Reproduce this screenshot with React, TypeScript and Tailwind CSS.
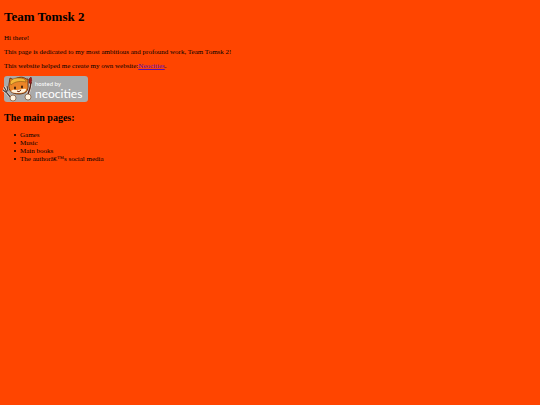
const pages = ['Games', 'Music', 'Main books', 'The authorâ€™s social media'];

function CatLogo() {
  return (
    <svg viewBox="0 0 36 28" className="absolute -top-px -left-1 h-7 w-9" aria-hidden="true">
      {/* fork and brush */}
      <path d="M4 12l3 5M7 11l1 5M3 15l4 3 4 5" fill="none" stroke="#f4e6d8" strokeWidth="2.6" />
      <path d="M4 12l3 5M7 11l1 5M3 15l4 3 4 5" fill="none" stroke="#4a4446" strokeWidth="1.3" />
      <path d="M31 4l-1 8-2 7" fill="none" stroke="#f4e6d8" strokeWidth="3" />
      <path d="M31 7l-1 6-2 6" fill="none" stroke="#5a2418" strokeWidth="1.5" />
      <path d="M31 2l1 3-1 4-2-1 0-4z" fill="#a01818" stroke="#54120c" strokeWidth="0.5" />
      {/* head */}
      <path d="M9 9l1-6 4 2c3-3 9-4 12-1l2 0 0 6c1 6-3 9-9 9-7 0-11-3-10-10z" fill="#ec8527" stroke="#5e2c10" strokeWidth="0.9" />
      <path d="M10 8c1-4 4-5 9-5 4 0 7 1 7 4-5-1-11-1-15 3z" fill="#f5b638" stroke="#8a5213" strokeWidth="0.6" />
      <path d="M11 16c2-2 4-1 6-1 3 0 6-2 9-1 0 3-3 4-7 4-4 0-7 0-8-2z" fill="#fff0d8" />
      <ellipse cx="15" cy="13" rx="1" ry="1.400" fill="#3d1d0e" />
      <ellipse cx="22" cy="12" rx="1" ry="1.400" fill="#3d1d0e" />
      <path d="M17 16q2 2 4-1" fill="none" stroke="#6d2414" strokeWidth="1" />
      {/* paws */}
      <circle cx="13" cy="23" r="3" fill="#fff3df" stroke="#7a4a2a" strokeWidth="0.7" />
      <circle cx="28" cy="22" r="3" fill="#fff3df" stroke="#7a4a2a" strokeWidth="0.7" />
    </svg>
  );
}

function HostedBadge() {
  return (
    <a href="https://neocities.org" className="relative flex h-[26px] w-[84px] flex-col rounded-[3px] bg-[#aaa] pt-1 pl-[31px] font-[Lato,sans-serif] text-white">
      <CatLogo />
      <span className="text-[6px] leading-[7px]">hosted by</span>
      <span className="text-[12px] leading-[14px]">neocities</span>
    </a>
  );
}

export default function App() {
  return (
    <main className="min-h-screen bg-[#ff4500] px-1 pt-[9px] font-['Liberation_Serif',serif] text-[7px] leading-[8px] text-black">
      <h1 className="text-[13px] leading-[15px] font-bold">Team Tomsk 2</h1>
      <div className="mt-[10px] flex flex-col gap-[6px]">
        <p>Hi there!</p>
        <p>This page is dedicated to my most ambitious and profound work, Team Tomsk 2!</p>
        <p>
          This website helped me create my own website:
          <a href="https://neocities.org" className="text-[#5a10b0] underline">Neocities</a>.
        </p>
        <HostedBadge />
      </div>
      <h2 className="mt-[10px] text-[10px] leading-[12px] font-bold">The main pages:</h2>
      <ul className="mt-[7px] pl-[10px]">
        {pages.map((page) => (
          <li key={page} className="flex items-center gap-1 before:size-[2px] before:rounded-full before:bg-black before:content-['']">
            {page}
          </li>
        ))}
      </ul>
    </main>
  );
}
